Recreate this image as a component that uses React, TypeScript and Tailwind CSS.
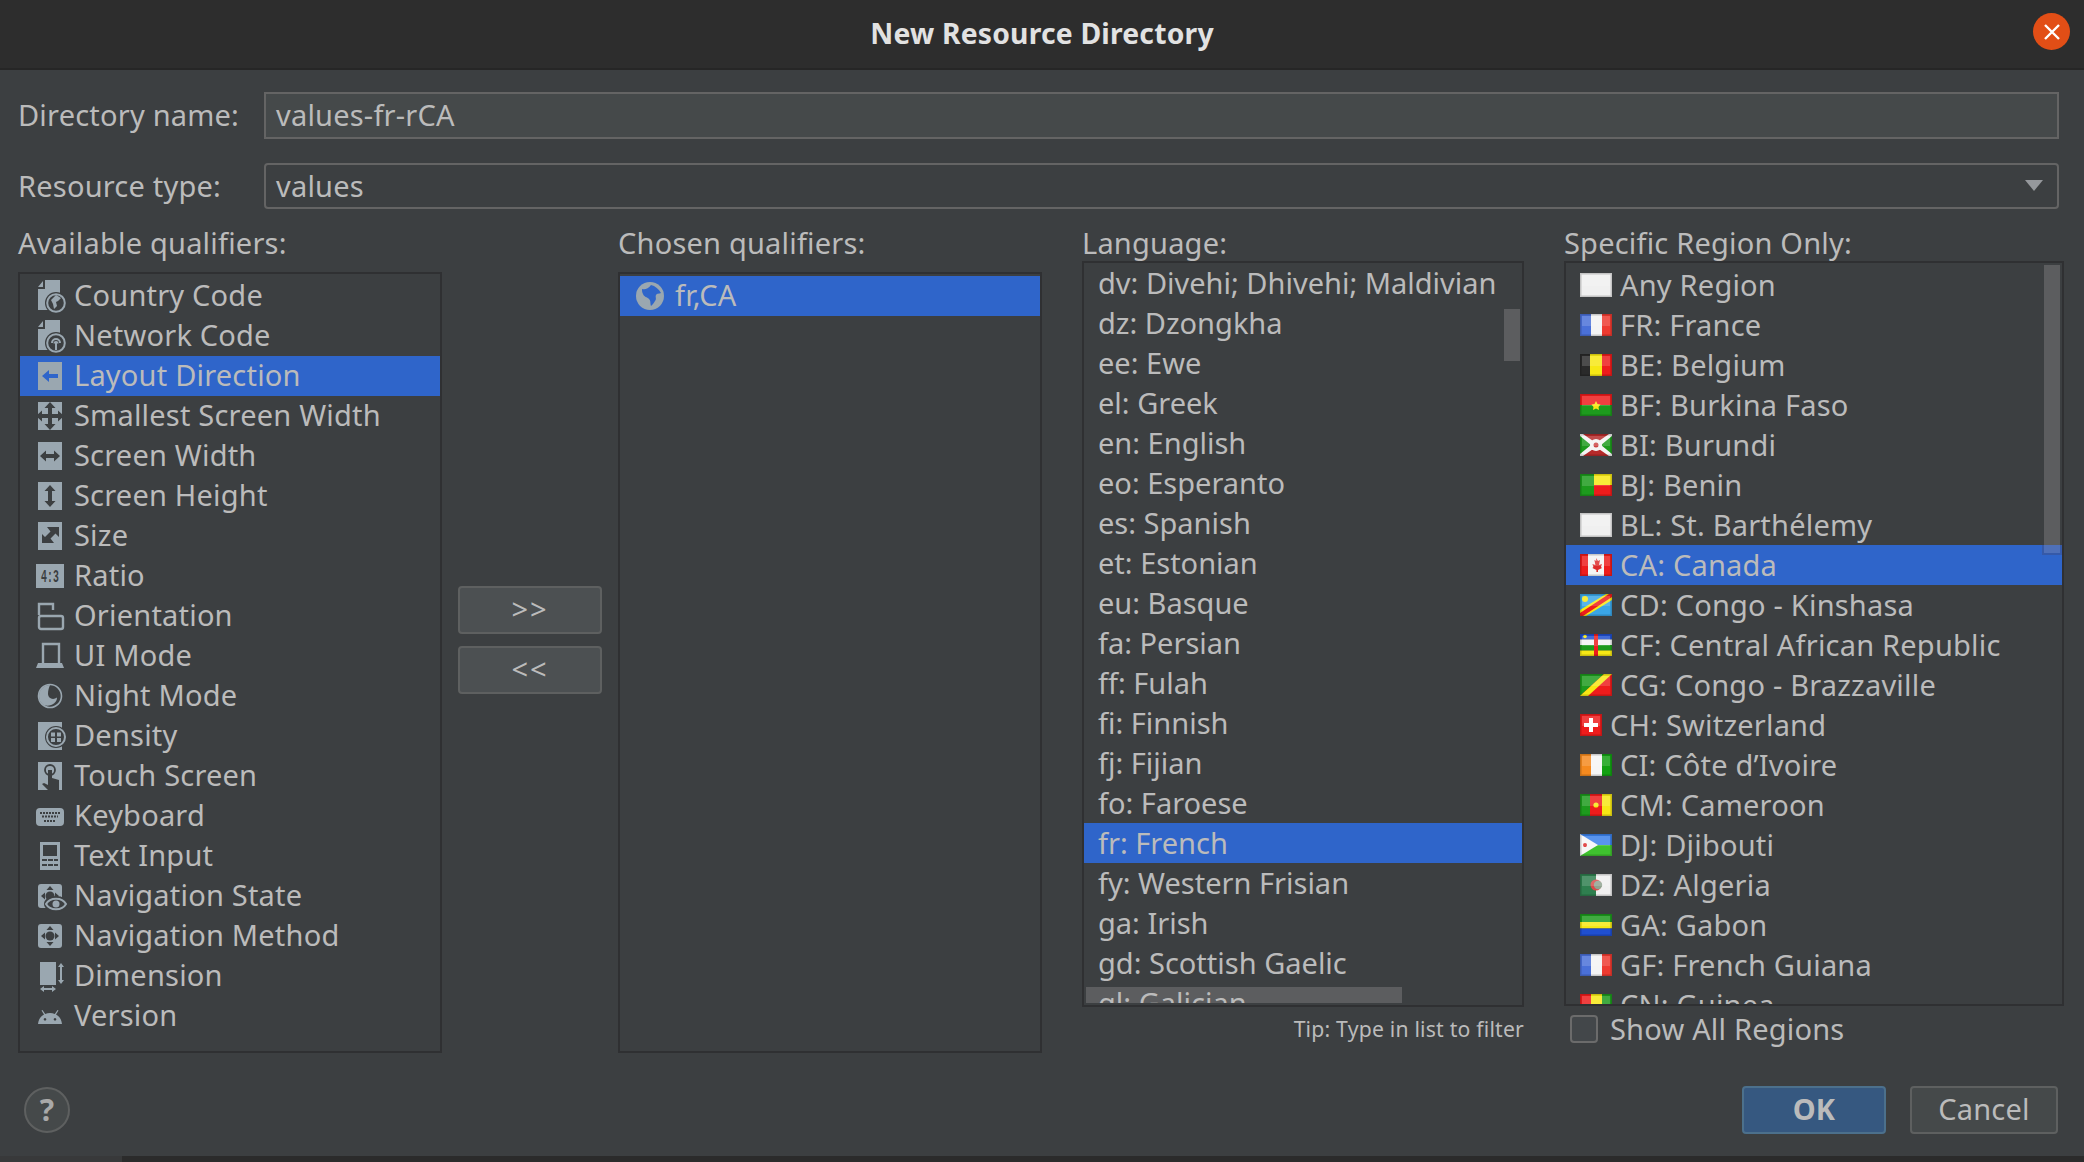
import React from 'react';

// Colours of the IntelliJ Darcula dialog
const ICON = '#9aa7b0';
const PANEL = '#3c3f41';
const SELECT = '#2f65ca';

const QUALIFIERS = [
  'Country Code', 'Network Code', 'Layout Direction', 'Smallest Screen Width', 'Screen Width',
  'Screen Height', 'Size', 'Ratio', 'Orientation', 'UI Mode', 'Night Mode', 'Density',
  'Touch Screen', 'Keyboard', 'Text Input', 'Navigation State', 'Navigation Method', 'Dimension', 'Version',
];

const LANGUAGES = [
  'dv: Divehi; Dhivehi; Maldivian', 'dz: Dzongkha', 'ee: Ewe', 'el: Greek', 'en: English', 'eo: Esperanto',
  'es: Spanish', 'et: Estonian', 'eu: Basque', 'fa: Persian', 'ff: Fulah', 'fi: Finnish', 'fj: Fijian',
  'fo: Faroese', 'fr: French', 'fy: Western Frisian', 'ga: Irish', 'gd: Scottish Gaelic', 'gl: Galician',
];

const REGIONS: [string, string][] = [
  ['blank', 'Any Region'], ['fr', 'FR: France'], ['be', 'BE: Belgium'], ['bf', 'BF: Burkina Faso'],
  ['bi', 'BI: Burundi'], ['bj', 'BJ: Benin'], ['blank', 'BL: St. Barthélemy'], ['ca', 'CA: Canada'],
  ['cd', 'CD: Congo - Kinshasa'], ['cf', 'CF: Central African Republic'], ['cg', 'CG: Congo - Brazzaville'],
  ['ch', 'CH: Switzerland'], ['ci', 'CI: Côte d’Ivoire'], ['cm', 'CM: Cameroon'], ['dj', 'DJ: Djibouti'],
  ['dz', 'DZ: Algeria'], ['ga', 'GA: Gabon'], ['fr', 'GF: French Guiana'], ['gn', 'CN: Guinea'],
];

function Arrows({ kind, color }: { kind: string; color: string }) {
  if (kind === 'h') return <path d="M4 14l6-5.500v3.500h8V8.500l6 5.500-6 5.500V16h-8v3.500z" fill={color} />;
  if (kind === 'v') return <path d="M14 3l5.500 6H16v10h3.500L14 25l-5.500-6H12V9H8.500z" fill={color} />;
  if (kind === 'd') return <path d="M23 5v10l-3.500-3.500-5 5L18 21H6V12l3 3 5.500-5.500L11 5z" fill={color} />;
  return <path d="M14 0l5.500 6H16v6h6V8.500l6 5.500-6 5.500V16h-6v6h3.500L14 28l-5.500-6H12v-6H6v3.500L0 14l6-5.500V12h6V6H8.500z" fill={color} />;
}

function Dpad({ color }: { color: string }) {
  return (
    <g fill={color}>
      <circle cx="14" cy="14" r="4.500" />
      <path d="M14 4l3.500 4h-7zM14 24l3.500-4h-7zM5 14l4-3.500v7zM23 14l-4-3.500v7z" />
    </g>
  );
}

function QualifierIcon({ name, rowBg = PANEL }: { name: string; rowBg?: string }) {
  let body: React.ReactNode = null;
  if (name === 'Country Code' || name === 'Network Code') {
    body = (
      <>
        <path d="M9-2H24V28H2V7H9ZM2 5 7-1V5Z" fill={ICON} />
        <circle cx="20" cy="21" r="11" fill={rowBg} />
        <circle cx="20" cy="21" r="8.800" fill="none" stroke={ICON} strokeWidth="2" />
        {name === 'Country Code' ? (
          <path d="M15 18l5-5 5 3-3 3-2 1 1 4-3 3-1-5z" fill={ICON} />
        ) : (
          <path d="M16 21a4 4 0 1 1 8 0M18.500 21.500a1.500 1.500 0 1 1 3 0M20 21v7" fill="none" stroke={ICON} strokeWidth="2" />
        )}
      </>
    );
  } else if (name === 'Layout Direction') {
    body = (
      <>
        <rect x="2" width="24" height="28" fill={ICON} />
        <path d="M6 14l7-6v4h9v4h-9v4z" fill={rowBg} />
      </>
    );
  } else if (['Smallest Screen Width', 'Screen Width', 'Screen Height', 'Size'].includes(name)) {
    const kind = { 'Smallest Screen Width': 'x', 'Screen Width': 'h', 'Screen Height': 'v', Size: 'd' }[name] as string;
    body = (
      <>
        <rect x="2" width="24" height="28" fill={ICON} />
        <Arrows kind={kind} color={rowBg} />
      </>
    );
  } else if (name === 'Ratio') {
    body = (
      <>
        <rect y="2" width="28" height="24" fill={ICON} />
        <text x="14" y="20" textAnchor="middle" fontSize="18" fontWeight="700" fontFamily="'Liberation Mono', monospace" textLength="18" lengthAdjust="spacingAndGlyphs" fill={rowBg}>4:3</text>
      </>
    );
  } else if (name === 'Orientation') {
    body = (
      <g fill="none" stroke={ICON} strokeWidth="2.400">
        <path d="M3 13V2h14v6" />
        <rect x="3" y="14" width="24" height="13" rx="2" />
      </g>
    );
  } else if (name === 'UI Mode') {
    body = (
      <>
        <path d="M7 21V2h16v19" fill="none" stroke={ICON} strokeWidth="2.400" />
        <path d="M2 21h24l2 5H0z" fill={ICON} />
      </>
    );
  } else if (name === 'Night Mode') {
    body = (
      <>
        <circle cx="14" cy="14" r="11.500" fill="none" stroke={ICON} strokeWidth="1.600" />
        <path d="M14 3a11 11 0 0 0-11 11c0 5 3 8.500 6 9.500 7 1 12-3 12-8-4 3-9 1-9-4 0-3 1-6 2-8.500z" fill={ICON} />
      </>
    );
  } else if (name === 'Density') {
    body = (
      <>
        <rect x="2" width="24" height="28" fill={ICON} />
        <circle cx="20" cy="15" r="11" fill={rowBg} />
        <circle cx="20" cy="15" r="9" fill="none" stroke={ICON} strokeWidth="2" />
        <path d="M15 10.500h4v4h-4zM21 10.500h4v4h-4zM15 16h4v4h-4zM21 16h4v4h-4z" fill={ICON} />
      </>
    );
  } else if (name === 'Touch Screen') {
    body = (
      <>
        <rect x="2" width="24" height="28" fill={ICON} />
        <circle cx="14" cy="8" r="5" fill="none" stroke={rowBg} strokeWidth="1.800" />
        <path d="M12 8h4v8l7 2v10H12l-6-6 2-1 4 2z" fill={rowBg} />
      </>
    );
  } else if (name === 'Keyboard') {
    body = (
      <>
        <rect y="6" width="28" height="18" rx="4" fill={ICON} />
        <path d="M4 11h20M6 14.500h16M8 19h12" stroke={rowBg} strokeWidth="2" strokeDasharray="2 1" fill="none" />
      </>
    );
  } else if (name === 'Text Input') {
    body = (
      <>
        <rect x="4" width="20" height="28" fill={ICON} />
        <rect x="7" y="3" width="14" height="11" fill={rowBg} />
        <path d="M6 18h16M6 23h16" stroke={rowBg} strokeWidth="2" strokeDasharray="5 1" fill="none" />
      </>
    );
  } else if (name === 'Navigation State') {
    body = (
      <>
        <rect x="2" y="2" width="24" height="24" rx="3" fill={ICON} />
        <Dpad color={rowBg} />
        <ellipse cx="20" cy="22" rx="12" ry="8" fill={rowBg} />
        <path d="M10 22c4-7 16-7 20 0-4 7-16 7-20 0z" fill="none" stroke={ICON} strokeWidth="2" />
        <circle cx="20" cy="22" r="3.500" fill={ICON} />
      </>
    );
  } else if (name === 'Navigation Method') {
    body = (
      <>
        <rect x="2" y="2" width="24" height="24" rx="3" fill={ICON} />
        <Dpad color={rowBg} />
      </>
    );
  } else if (name === 'Dimension') {
    body = (
      <>
        <rect x="4" width="16" height="23" fill={ICON} />
        <path d="M25 1l3 4h-2v13h2l-3 4-3-4h2V5h-2zM4 27l4-3v2h8v-2l4 3-4 3v-2H8v2z" fill={ICON} />
      </>
    );
  } else {
    body = (
      <path d="M2 22c.5-5 3-8 6-9.500L5.500 8.500l1-.6 2.700 4c3-1.200 6.600-1.200 9.600 0l2.700-4 1 .6-2.500 4c3 1.500 5.500 4.500 6 9.500zM9 16a1.300 1.300 0 1 0 .01 0M19 16a1.300 1.300 0 1 0 .01 0" fill={ICON} fillRule="evenodd" />
    );
  }
  return (
    <svg width="32" height="28" viewBox="0 0 32 28" className="shrink-0 overflow-visible">
      {body}
    </svg>
  );
}

function Flag({ code }: { code: string }) {
  const w = code === 'ch' ? 22 : 32;
  const h = code === 'blank' ? 24 : 22;
  let art: React.ReactNode = null;
  const R = '#ee1c1c', G = '#1d9a1d', Y = '#f7e814', B = '#1f4fd0';
  if (code === 'blank') art = <rect width="32" height="24" fill="#f0f0f0" />;
  if (code === 'fr') art = <><rect width="11" height="22" fill="#4a70d8" /><rect x="11" width="11" height="22" fill="#f4f4f4" /><rect x="22" width="10" height="22" fill="#ee3a30" /></>;
  if (code === 'be') art = <><rect width="10" height="22" fill="#2a2a2a" /><rect x="10" width="12" height="22" fill={Y} /><rect x="22" width="10" height="22" fill={R} /></>;
  if (code === 'bf') art = <><rect width="32" height="11" fill={R} /><rect y="11" width="32" height="11" fill={G} /><path d="M16 7l1.500 3 3 .5-2 2.500.5 3-3-1.500-3 1.500.5-3-2-2.500 3-.5z" fill={Y} /></>;
  if (code === 'bi') art = <><rect width="32" height="22" fill="#f4f4f4" /><path d="M3 0h26L16 9zM3 22h26L16 13z" fill="#b52a2a" /><path d="M0 2v18l11-9zM32 2v18l-11-9z" fill={G} /><circle cx="16" cy="11" r="6" fill="#f4f4f4" /><circle cx="16" cy="11" r="2.500" fill="#c44" /></>;
  if (code === 'bj') art = <><rect width="14" height="22" fill={G} /><rect x="14" width="18" height="11" fill={Y} /><rect x="14" y="11" width="18" height="11" fill={R} /></>;
  if (code === 'ca') art = <><rect width="32" height="22" fill="#f4f4f4" /><rect width="8" height="22" fill={R} /><rect x="24" width="8" height="22" fill={R} /><path d="M16 4l2 3 2-1-1 5 3-1-1 3 1 1-4 2v2h-1.600v-2l-4-2 1-1-1-3 3 1-1-5 2 1z" fill="#dd2a2a" /></>;
  if (code === 'cd') art = <><rect width="32" height="22" fill="#3aa6e8" /><path d="M0 22V16L26 0h6v6L6 22z" fill={Y} /><path d="M0 22v-3L29 0h3v3L3 22z" fill={R} /><circle cx="5" cy="5" r="3" fill={Y} /></>;
  if (code === 'cf') art = <><rect width="32" height="5.500" fill={B} /><rect y="5.500" width="32" height="5.500" fill="#f4f4f4" /><rect y="11" width="32" height="5.500" fill={G} /><rect y="16.500" width="32" height="5.500" fill={Y} /><rect x="14" width="4" height="22" fill={R} /><circle cx="5" cy="2.500" r="1.800" fill={Y} /></>;
  if (code === 'cg') art = <><path d="M0 0h32v22H0z" fill={R} /><path d="M0 0h24L0 22z" fill={G} /><path d="M24 0h8L8 22H0z" fill={Y} /></>;
  if (code === 'ch') art = <><rect width="22" height="22" fill={R} /><path d="M9 4h4v5h5v4h-5v5H9v-5H4V9h5z" fill="#fff" /></>;
  if (code === 'ci') art = <><rect width="11" height="22" fill="#f58a1f" /><rect x="11" width="11" height="22" fill="#f6f6f6" /><rect x="22" width="10" height="22" fill="#12a012" /></>;
  if (code === 'cm') art = <><rect width="10" height="22" fill={G} /><rect x="10" width="12" height="22" fill={R} /><rect x="22" width="10" height="22" fill={Y} /><circle cx="16" cy="11" r="2.600" fill={Y} /></>;
  if (code === 'dj') art = <><rect width="32" height="11" fill="#3a80ea" /><rect y="11" width="32" height="11" fill="#3fc22f" /><path d="M0 0l18 11L0 22z" fill="#f6f6f6" /><circle cx="5" cy="11" r="2" fill="#dd2a2a" /></>;
  if (code === 'dz') art = <><rect width="16" height="22" fill="#2f7f4f" /><rect x="16" width="16" height="22" fill="#f0f0f0" /><circle cx="16" cy="11" r="5.500" fill="#d84a4a" /><circle cx="18" cy="11" r="4.200" fill="#8ea38f" /></>;
  if (code === 'ga') art = <><rect width="32" height="8" fill={G} /><rect y="8" width="32" height="6.500" fill={Y} /><rect y="14.500" width="32" height="7.500" fill={B} /></>;
  if (code === 'gn') art = <><rect width="11" height="22" fill={R} /><rect x="11" width="11" height="22" fill={Y} /><rect x="22" width="10" height="22" fill={G} /></>;
  return (
    <svg width={w} height={h} viewBox={`0 0 ${w} ${h}`} className="shrink-0">
      {art}
      <rect x="0.750" y="0.750" width={w - 1.500} height={h - 1.500} fill="none" stroke="#000" strokeOpacity="0.18" strokeWidth="1.500" />
      <rect x="2" y="2" width={w - 4} height={h / 2 - 1} fill="#fff" fillOpacity="0.16" />
    </svg>
  );
}

function ListBox({ className, children }: { className: string; children: React.ReactNode }) {
  return <div className={`relative overflow-hidden border-2 border-[#2f3032] bg-[#3c3f41] ${className}`}>{children}</div>;
}

function Btn({ children, primary = false, className = '' }: { children: React.ReactNode; primary?: boolean; className?: string }) {
  return (
    <button
      type="button"
      className={`flex items-center justify-center rounded-[4px] border-2 pb-[2px] text-[#bbbbbb] ${
        primary ? 'border-[#4c708c] bg-[#365880] font-bold' : 'border-[#5e6060]'
      } ${className}`}
    >
      {children}
    </button>
  );
}

export default function App() {
  return (
    <div
      className="flex h-[1162px] w-[2084px] flex-col overflow-hidden bg-[#3c3f41] text-[29px] leading-[40px] tracking-[0.2px] text-[#bbbbbb]"
      style={{ fontFamily: "'Noto Sans', sans-serif" }}
    >
      {/* Title bar */}
      <div className="relative flex h-[70px] shrink-0 items-center justify-center border-b-2 border-[#262626] bg-[#2d2d2d] pb-[2px]">
        <span className="text-[28.300px] font-bold text-[#e2e2e2]">New Resource Directory</span>
        <div className="absolute right-[14px] top-[13px] flex h-[37px] w-[37px] items-center justify-center rounded-full bg-[#e24e16]">
          <svg width="18" height="18" viewBox="0 0 18 18">
            <path d="M2 2l14 14M16 2L2 16" stroke="#fff" strokeWidth="2.400" />
          </svg>
        </div>
      </div>

      {/* Form */}
      <div className="flex flex-1 flex-col pl-[18px] pr-[20px] pt-[22px]">
        <div className="flex h-[47px] items-center">
          <span className="w-[246px] pb-[1px]">Directory name:</span>
          <div className="flex h-full w-[1795px] items-center border-2 border-[#646464] bg-[#45494a] pb-[1px] pl-[10px]">values-fr-rCA</div>
        </div>
        <div className="mt-[24px] flex h-[46px] items-center">
          <span className="w-[246px] pb-[1px]">Resource type:</span>
          <div className="flex h-full w-[1795px] items-center justify-between rounded-[4px] border-2 border-[#646464] pb-[1px] pl-[10px] pr-[14px]">
            values
            <svg width="18" height="11" viewBox="0 0 18 11">
              <path d="M0 0h18L9 11z" fill="#95989c" />
            </svg>
          </div>
        </div>

        <div className="mt-[14px] flex">
          {/* Available qualifiers */}
          <div className="w-[424px] shrink-0">
            <div className="h-[49px]">Available qualifiers:</div>
            <ListBox className="h-[781px] pt-[2px]">
              {QUALIFIERS.map((q, i) => (
                <div key={q} className={`flex h-[40px] items-center gap-[6px] pl-[16px] ${i === 2 ? 'bg-[#2f65ca]' : ''}`}>
                  <QualifierIcon name={q} rowBg={i === 2 ? SELECT : PANEL} />
                  <span className="pb-[2px]">{q}</span>
                </div>
              ))}
            </ListBox>
          </div>

          {/* Move buttons */}
          <div className="flex w-[176px] shrink-0 flex-col items-center gap-[12px] pt-[363px]">
            <Btn className="h-[48px] w-[144px] bg-[#4c5052] tracking-[2px]">&gt;&gt;</Btn>
            <Btn className="h-[48px] w-[144px] bg-[#4c5052] tracking-[2px]">&lt;&lt;</Btn>
          </div>

          {/* Chosen qualifiers */}
          <div className="w-[424px] shrink-0">
            <div className="h-[49px]">Chosen qualifiers:</div>
            <ListBox className="h-[781px] pt-[2px]">
              <div className="flex h-[40px] items-center gap-[11px] bg-[#2f65ca] pl-[16px]">
                <svg width="28" height="28" viewBox="0 0 28 28">
                  <circle cx="14" cy="14" r="14" fill={ICON} />
                  <path d="M6 7c3 1 6 0 9-4 4 1 8 4 10 8-2 1-4 0-5 2s1 4-1 6c-1 2-2 3-4 5-1-3 0-5-2-7s-5-2-6-5c-1-2-1-3-1-5z" fill={SELECT} />
                </svg>
                <span className="pb-[2px]">fr,CA</span>
              </div>
            </ListBox>
          </div>

          {/* Language */}
          <div className="ml-[40px] w-[442px] shrink-0">
            <div className="h-[38px]">Language:</div>
            <ListBox className="h-[746px] tracking-[0px]">
              {/* scrollbars first: the rows are positioned, so text paints over the horizontal bar */}
              <div className="absolute bottom-[2px] left-[2px] h-[16px] w-[316px] bg-[#5c5d5f]" />
              {LANGUAGES.map((l, i) => (
                <div key={l} className={`relative flex h-[40px] items-center pl-[14px] ${i === 14 ? 'bg-[#2f65ca]' : ''}`}>
                  {l}
                </div>
              ))}
              <div className="absolute right-[2px] top-[46px] h-[52px] w-[16px] bg-[#5c5d5f]" />
              <div className="absolute inset-x-0 bottom-0 h-[2px] bg-[#3c3f41]" />
            </ListBox>
            <div className="mt-[5px] text-right text-[21.200px] leading-[34px]">Tip: Type in list to filter</div>
          </div>

          {/* Region */}
          <div className="ml-[40px] w-[500px] shrink-0">
            <div className="h-[38px]">Specific Region Only:</div>
            <ListBox className="h-[745px] pt-[2px]">
              {REGIONS.map(([code, name], i) => (
                <div key={name} className={`flex h-[40px] items-center gap-[8px] pl-[14px] ${i === 7 ? 'bg-[#2f65ca]' : ''}`}>
                  <Flag code={code} />
                  <span>{name}</span>
                </div>
              ))}
              <div className="absolute right-[2px] top-[2px] h-[288px] w-[16px] bg-[#5c5d5f]" />
              <div className="absolute right-0 top-[282px] h-[10px] w-[20px] border-x-2 border-b-2 border-[#3559a8] bg-[#4f70b8]" />
            </ListBox>
            <div className="mt-[9px] flex h-[28px] items-center gap-[12px] pl-[6px]">
              <div className="h-[28px] w-[28px] rounded-[4px] border-2 border-[#6b6b6b] bg-[#43474a]" />
              <span>Show All Regions</span>
            </div>
          </div>
        </div>

        {/* Footer */}
        <div className="mt-[33px] flex items-center justify-between">
          <div className="ml-[6px] flex h-[46px] w-[46px] items-center justify-center rounded-full border-2 border-[#5e6060] bg-[#45494a] text-[30px] font-bold text-[#a9a9a9]">?</div>
          <div className="flex gap-[24px] pr-[6px]">
            <Btn primary className="h-[48px] w-[144px]">OK</Btn>
            <Btn className="h-[48px] w-[148px] bg-[#45494a]">Cancel</Btn>
          </div>
        </div>
      </div>

      {/* Bottom edge */}
      <div className="h-[6px] shrink-0 bg-[#2b2b2b]">
        <div className="h-full w-[122px] bg-[#38393a]" />
      </div>
    </div>
  );
}
